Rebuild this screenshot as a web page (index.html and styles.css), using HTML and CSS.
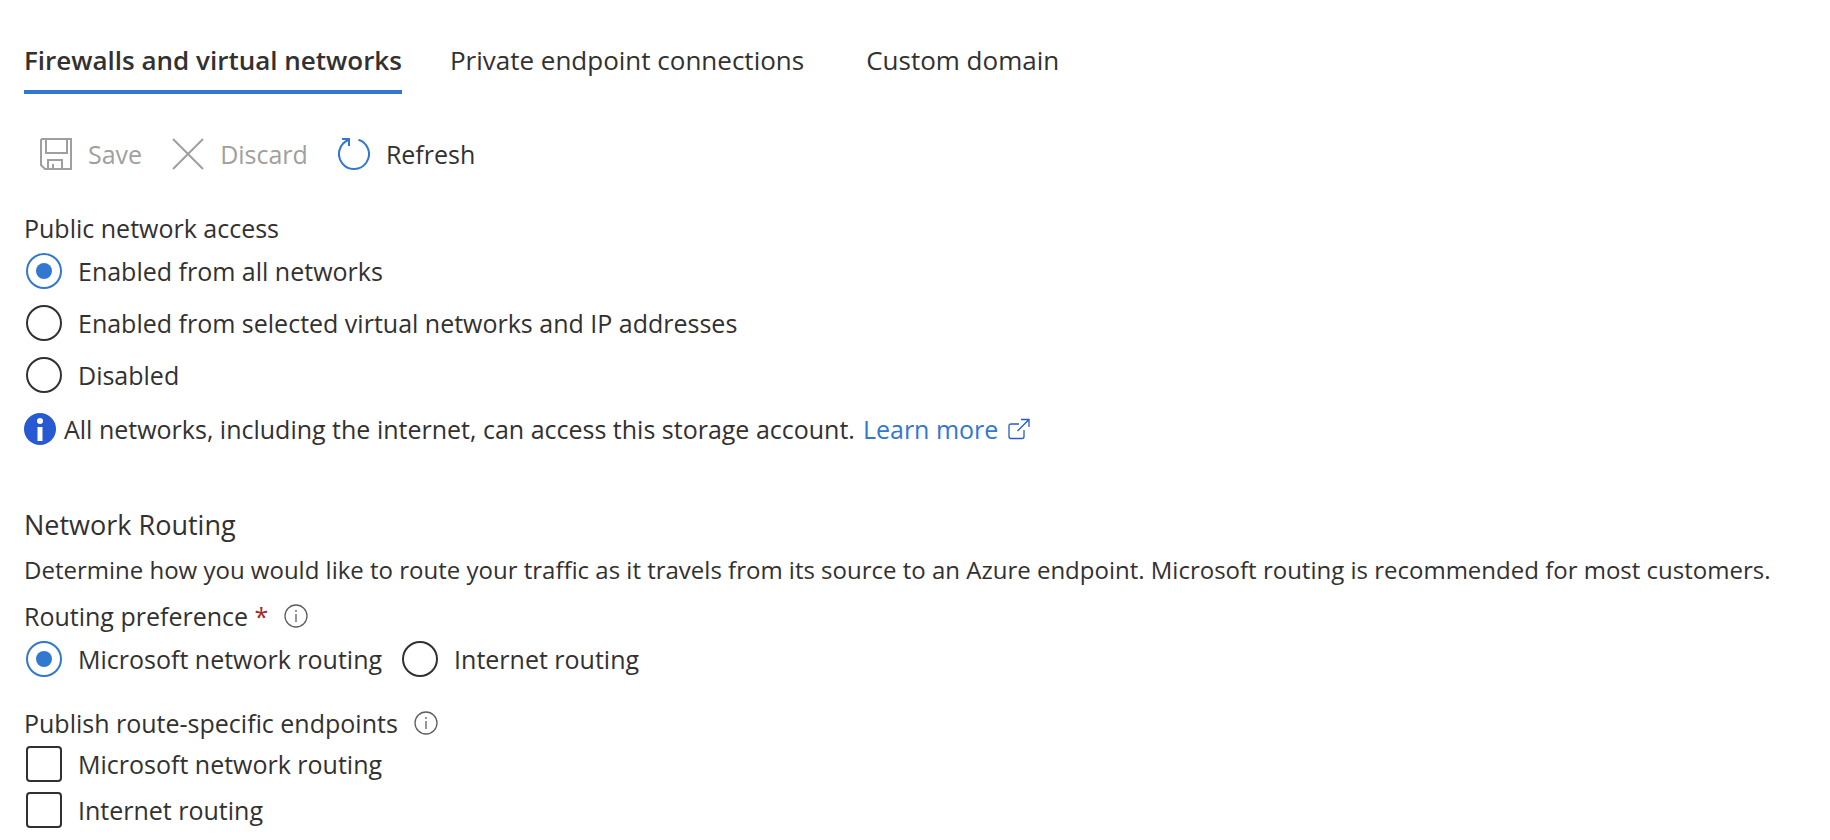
FILE: index.html
```html
<!DOCTYPE html>
<html lang="en">
<head>
<meta charset="utf-8">
<title>Networking</title>
<link rel="stylesheet" href="styles.css">
</head>
<body>
<main class="page">
  <nav class="tabs">
    <a class="tab tab-active" href="#firewalls" aria-current="page" data-label="Firewalls and virtual networks">Firewalls and virtual networks</a>
    <a class="tab" href="#endpoints" data-label="Private endpoint connections">Private endpoint connections</a>
    <a class="tab" href="#domain" data-label="Custom domain">Custom domain</a>
  </nav>

  <div class="toolbar">
    <button class="tool" type="button" disabled>
      <svg class="tool-icon" viewBox="0 0 32 32" fill="none" stroke="currentColor" stroke-width="2"><path d="M2 1H31V31H5L1 27V2Z"/><path d="M6 1V15H27V1M8 31V22H22V31M13 31V26"/></svg>
      Save
    </button>
    <button class="tool" type="button" disabled>
      <svg class="tool-icon" viewBox="0 0 32 32" fill="none" stroke="currentColor" stroke-width="2"><path d="M1 1L31 31M31 1L1 31"/></svg>
      Discard
    </button>
    <button class="tool" type="button">
      <svg class="tool-icon tool-icon-blue" viewBox="0 0 32 32" fill="none" stroke="currentColor" stroke-width="2"><path d="M20.500 1.700A15 15 0 1 1 10.500 2.050"/><path d="M4 1H11V8"/></svg>
      Refresh
    </button>
  </div>

  <fieldset class="group">
    <legend class="label">Public network access</legend>
    <div class="radio-list">
      <label class="choice"><input class="radio" type="radio" name="access" checked>Enabled from all networks</label>
      <label class="choice"><input class="radio" type="radio" name="access">Enabled from selected virtual networks and IP addresses</label>
      <label class="choice"><input class="radio" type="radio" name="access">Disabled</label>
    </div>
  </fieldset>

  <p class="notice">
    <svg class="notice-icon" viewBox="0 0 32 32"><circle cx="16" cy="16" r="16" fill="#2759d3"/><circle cx="16" cy="8" r="3" fill="#fff"/><path d="M13.500 14H18.500V28H13.500Z" fill="#fff"/></svg>
    <span>All networks, including the internet, can access this storage account.</span>
    <a class="link" href="#learn">Learn more
      <svg class="link-icon" viewBox="0 0 22 22" fill="none" stroke="currentColor" stroke-width="1.300"><path d="M11 6H3Q1 6 1 8V18.500Q1 20.500 3 20.500H14Q16 20.500 16 18.500V12M13 1.500H21V9M21 1.500L9.500 13"/></svg>
    </a>
  </p>

  <section class="routing">
    <h2 class="heading">Network Routing</h2>
    <p class="description">Determine how you would like to route your traffic as it travels from its source to an Azure endpoint. Microsoft routing is recommended for most customers.</p>
    <fieldset class="group">
      <legend class="label label-info">
        <span>Routing preference <span class="required">*</span></span>
        <svg class="info-icon" viewBox="0 0 24 24" fill="none" stroke="currentColor" stroke-width="1.300"><circle cx="12" cy="12" r="11"/><path d="M12 10V18M12 6V8"/></svg>
      </legend>
      <div class="radio-row">
        <label class="choice"><input class="radio" type="radio" name="routing" checked>Microsoft network routing</label>
        <label class="choice"><input class="radio" type="radio" name="routing">Internet routing</label>
      </div>
    </fieldset>
    <fieldset class="group publish">
      <legend class="label label-info">
        <span>Publish route-specific endpoints</span>
        <svg class="info-icon" viewBox="0 0 24 24" fill="none" stroke="currentColor" stroke-width="1.300"><circle cx="12" cy="12" r="11"/><path d="M12 10V18M12 6V8"/></svg>
      </legend>
      <div class="check-list">
        <label class="choice"><input class="check" type="checkbox">Microsoft network routing</label>
        <label class="choice"><input class="check" type="checkbox">Internet routing</label>
      </div>
    </fieldset>
  </section>
</main>
</body>
</html>
```

FILE: styles.css
```css
* { box-sizing: border-box; }

body {
  margin: 0;
  background: #fff;
  color: #323130;
  font-family: "Segoe UI", "Open Sans", "Noto Sans", sans-serif;
  font-size: 25px;
  line-height: 36px;
}

.page { padding: 42px 0 12px 24px; }

.tabs { display: flex; gap: 48px; }
.tab {
  padding-bottom: 12px;
  border-bottom: 4px solid transparent;
  color: inherit;
  font-size: 26px;
  line-height: 36px;
  text-decoration: none;
}
/* Reserves the bold width so tabs stay put when the selection changes. */
.tab::after {
  content: attr(data-label);
  display: block;
  height: 0;
  overflow: hidden;
  visibility: hidden;
  font-weight: 600;
}
.tab-active { border-color: #3277d0; font-weight: 600; }

.toolbar { display: flex; gap: 30px; margin: 42px 0 38px; padding-left: 16px; }
.tool {
  display: flex;
  align-items: center;
  gap: 16px;
  padding: 0;
  border: 0;
  background: none;
  color: inherit;
  font: inherit;
}
.tool:disabled { color: #a19f9d; }
.tool-icon { width: 32px; height: 32px; }
.tool-icon-blue { color: #3277d0; }

.group { margin: 0; padding: 0; border: 0; min-width: 0; }
.label { padding: 0; }
.label-info { display: flex; align-items: center; gap: 16px; }
.required { color: #a4262c; }
.info-icon { width: 24px; height: 24px; color: #605e5c; }

.radio-list { display: grid; justify-items: start; gap: 16px; padding: 7px 0 0 2px; }
.radio-row { display: flex; gap: 20px; padding: 7px 0 0 2px; }
.check-list { display: grid; justify-items: start; gap: 10px; padding: 5px 0 0 2px; }
.choice { display: flex; align-items: center; gap: 16px; }

.radio, .check {
  appearance: none;
  display: grid;
  place-items: center;
  flex: none;
  width: 36px;
  height: 36px;
  margin: 0;
  border: 2px solid #323130;
  background: #fff;
}
.radio { border-radius: 50%; }
.check { border-radius: 4px; }
.radio:checked { border-color: #3277d0; }
.radio:checked::before {
  content: "";
  width: 16px;
  height: 16px;
  border-radius: 50%;
  background: #3277d0;
}

.notice { display: flex; align-items: center; gap: 8px; margin: 18px 0 0; }
.notice-icon { width: 32px; height: 32px; }
.link { display: flex; align-items: center; gap: 10px; color: #3277d0; text-decoration: none; }
.link-icon { width: 22px; height: 22px; color: #2759d3; }

.routing { margin-top: 60px; }
.heading { margin: 0 0 9px; font-size: 27px; font-weight: 400; line-height: 36px; }
.description { margin: 0 0 10px; font-size: 24px; }
.publish { margin-top: 28px; }
```
